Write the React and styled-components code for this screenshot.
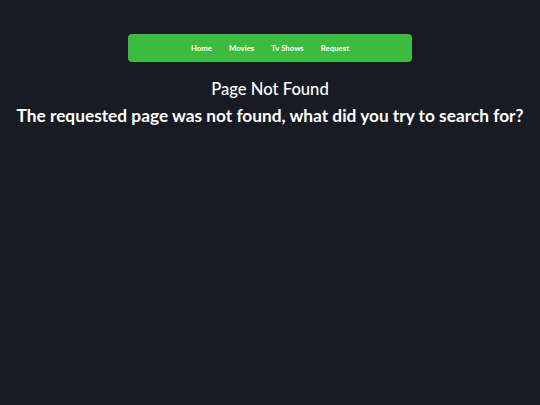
import styled, { createGlobalStyle } from 'styled-components';

const GlobalStyle = createGlobalStyle`
    html, body {
        margin: 0;
        padding: 0;
        background: #181b23;
        height: 100%;
    }
    #root {
        min-height: 100vh;
    }
`;

const links = ["Home", "Movies", "Tv Shows", "Request"];

function App() {
    return (
        <Page>
            <GlobalStyle />
            <NavBar>
                {links.map((l) => (
                    <NavLink key={l} href="#">{l}</NavLink>
                ))}
            </NavBar>
            <Title>Page Not Found</Title>
            <Message>The requested page was not found, what did you try to search for?</Message>
        </Page>
    );
}

export default App;

const Page = styled.div`
    display: flex;
    flex-direction: column;
    align-items: center;
    padding-top: 34px;
    font-family: "Comic Sans MS", "Lato", sans-serif;
    color: #fff;
`;

const NavBar = styled.nav`
    width: 284px;
    height: 28px;
    box-sizing: border-box;
    background: #3dbb3f;
    border-radius: 4px;
    display: flex;
    justify-content: center;
    align-items: center;
    gap: 17px;
`;

const NavLink = styled.a`
    color: #fff;
    text-decoration: none;
    font-size: 7.8px;
    font-weight: 700;
`;

const Title = styled.h1`
    margin: 16px 0 0;
    font-size: 16.6px;
    font-weight: 500;
    line-height: 22px;
`;

const Message = styled.h2`
    margin: 5px 0 0;
    font-size: 17.3px;
    font-weight: 700;
    line-height: 22px;
    white-space: nowrap;
`;
